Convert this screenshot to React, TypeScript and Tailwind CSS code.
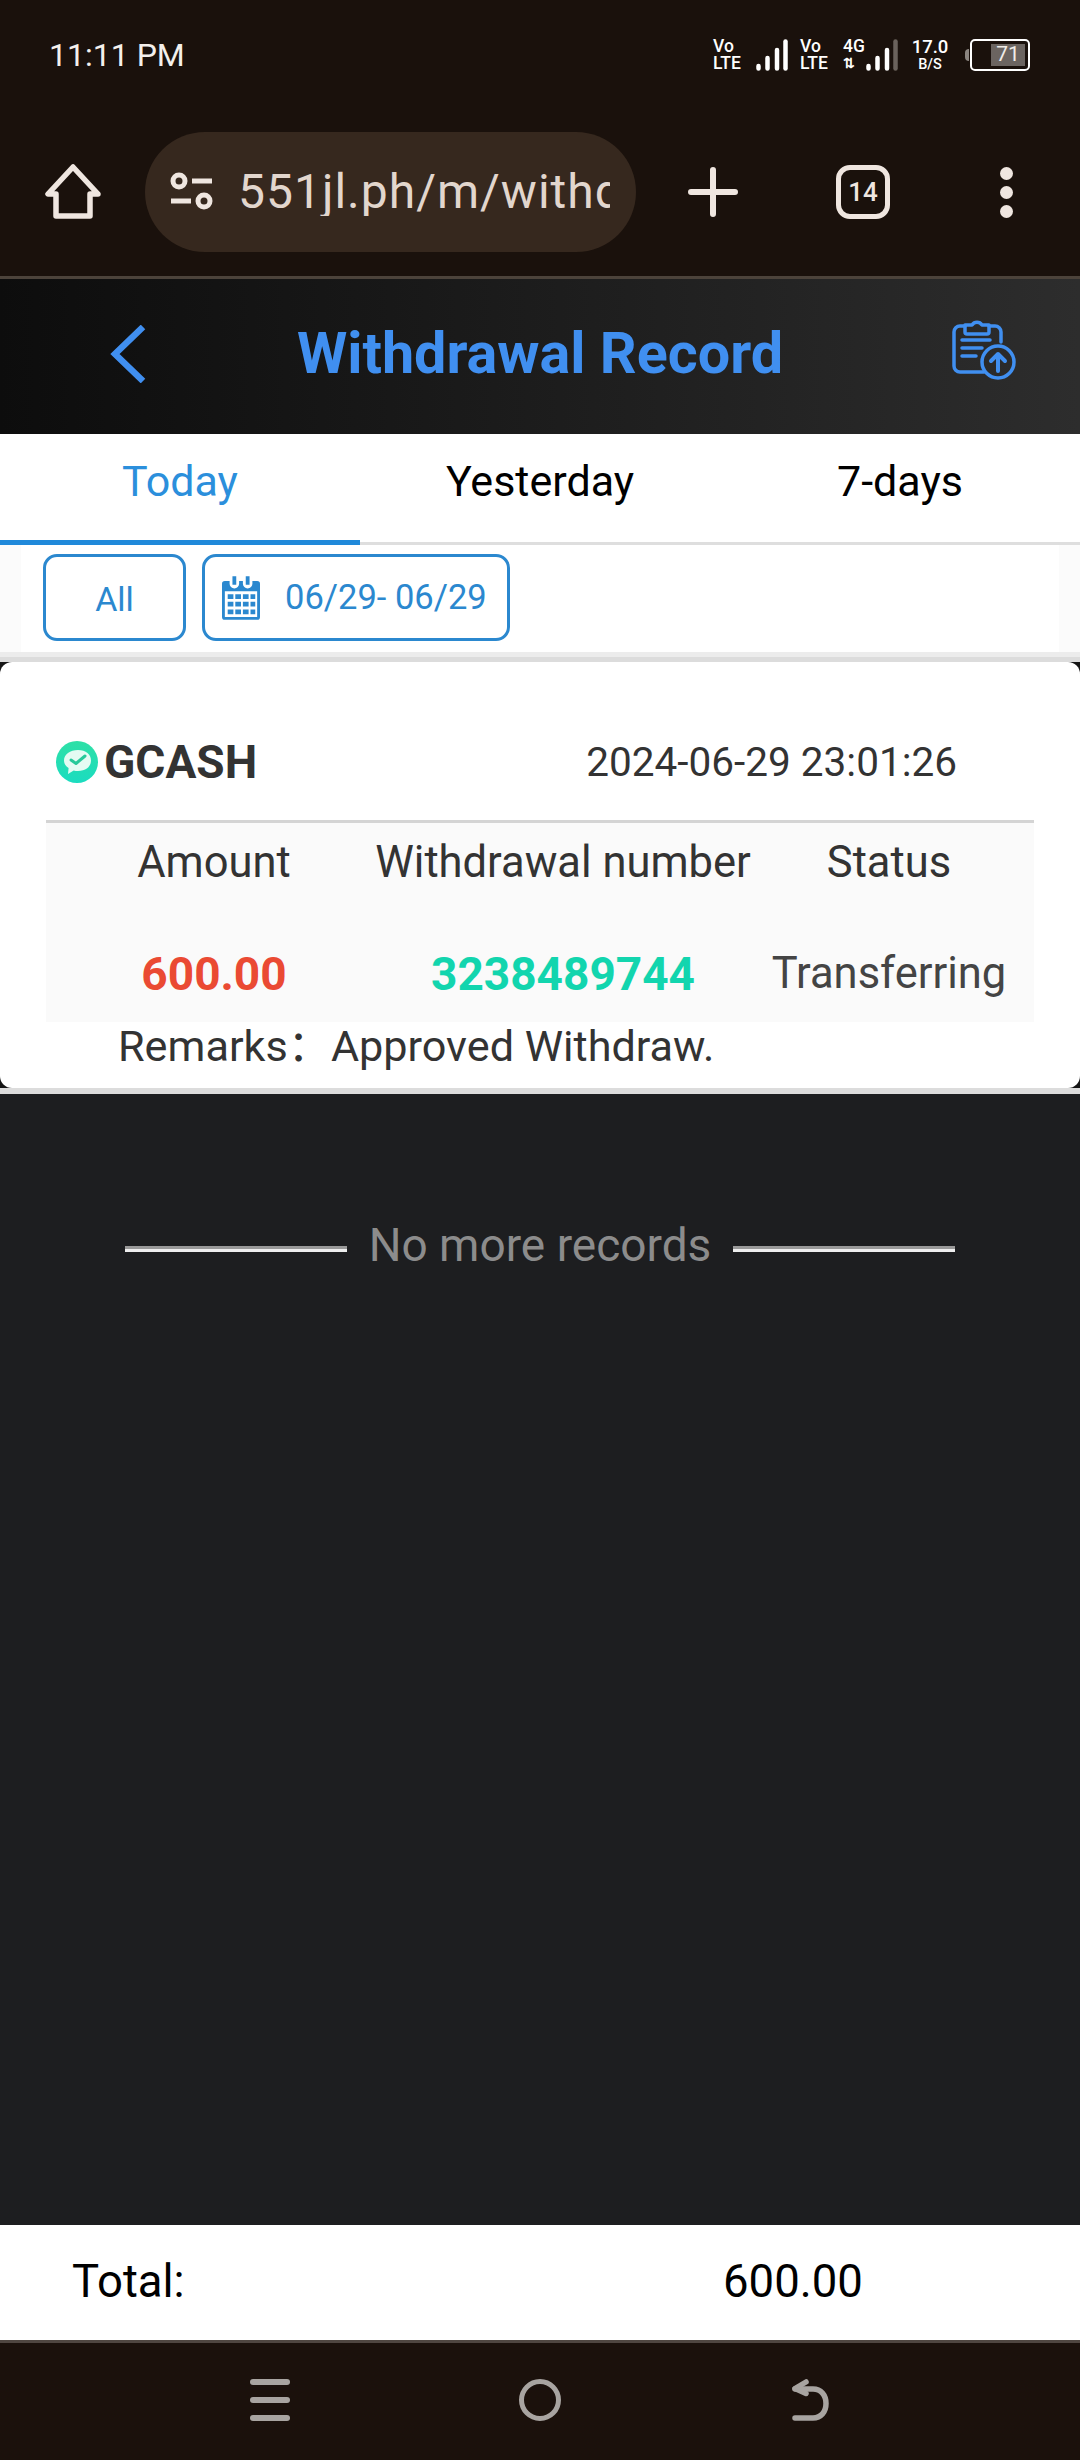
import React from "react";

function Net({ top, bottom }: { top: string; bottom: string }) {
  return (
    <div className="flex w-[29px] flex-col items-start text-[17.500px] font-medium leading-[17px] text-white">
      <span>{top}</span>
      <span>{bottom}</span>
    </div>
  );
}

function Signal({ dim }: { dim?: boolean }) {
  return (
    <svg width="32" height="32" viewBox="0 0 32 32" fill="none" strokeLinecap="round" strokeWidth="4.5">
      <path d="M2.500 27v2.500M11.500 19v10.500M21 11v18.500" stroke="#fff" />
      <path d="M29.500 2.500v27" stroke={dim ? "#6a625c" : "#fff"} />
    </svg>
  );
}

function StatusBar() {
  return (
    <div className="flex h-[110px] items-center justify-between pl-[49px] pr-[50px] pb-[1px]">
      <span className="text-[32px] leading-none text-[#f4f0ec]">11:11 PM</span>
      <div className="flex items-center">
        <Net top="Vo" bottom="LTE" />
        <div className="ml-[14px]">
          <Signal />
        </div>
        <div className="ml-[12px]">
          <Net top="Vo" bottom="LTE" />
        </div>
        <div className="ml-[14px] flex w-[23px] flex-col text-[17.500px] font-medium leading-[17px] text-white">
          <span>4G</span>
          <span className="text-[14px] font-bold">⇅</span>
        </div>
        <div className="ml-[0px]">
          <Signal dim />
        </div>
        <div className="ml-[14px] flex w-[36px] flex-col items-center text-white">
          <span className="text-[18.500px] font-medium leading-[19px]">17.0</span>
          <span className="text-[14.500px] font-medium leading-[15px]">B/S</span>
        </div>
        <div className="ml-[17px] h-[12px] w-[4px] rounded-l-sm bg-[#8b8580]" />
        <div className="ml-[1px] h-[32px] w-[60px] rounded-[5px] border-2 border-white p-[3px]">
          <div className="ml-[16px] flex h-full w-[34px] items-center justify-center bg-[#6b6460] text-[21px] leading-none text-[#f0ece8]">
            71
          </div>
        </div>
      </div>
    </div>
  );
}

function BrowserBar() {
  return (
    <div className="flex h-[166px] items-start pt-[22px] text-[#efe6e0]">
      <div className="flex h-[120px] w-[145px] items-center justify-center pl-[1px]">
        <svg width="56" height="56" viewBox="0 0 56 56" fill="none" stroke="currentColor" strokeWidth="5.5" strokeLinejoin="round">
          <path d="M28 3 3 30h8v22h34V30h8L28 3Z" />
        </svg>
      </div>
      <div className="flex h-[120px] w-[491px] items-center rounded-[60px] bg-[#36281e] pl-[24px]">
        <svg width="46" height="40" viewBox="0 0 46 40" fill="none" stroke="currentColor" strokeWidth="5">
          <circle cx="10" cy="9" r="6" />
          <path d="M23 9h20M2 29h20" />
          <circle cx="35" cy="29" r="6" />
        </svg>
        <div className="ml-[23px] w-[372px] overflow-hidden whitespace-nowrap text-[48px] leading-none tracking-[1px] text-[#e2d6cd]">
          551jl.ph/m/withdraw
        </div>
      </div>
      <div className="flex h-[120px] w-[152px] items-center justify-center pl-[2px]">
        <svg width="50" height="50" viewBox="0 0 50 50" fill="none" stroke="currentColor" strokeWidth="6" strokeLinecap="round">
          <path d="M25 3v44M3 25h44" />
        </svg>
      </div>
      <div className="flex h-[120px] w-[150px] items-center justify-center">
        <div className="flex h-[54px] w-[54px] items-center justify-center rounded-[14px] border-[5px] border-[#efe6e0] text-[26px] font-medium leading-none">
          14
        </div>
      </div>
      <div className="flex h-[120px] flex-1 flex-col items-center justify-center gap-[6px] pr-[6px]">
        <span className="h-[13px] w-[13px] rounded-full bg-[#efe6e0]" />
        <span className="h-[13px] w-[13px] rounded-full bg-[#efe6e0]" />
        <span className="h-[13px] w-[13px] rounded-full bg-[#efe6e0]" />
      </div>
    </div>
  );
}

function Header() {
  return (
    <div className="flex h-[155px] items-center justify-between bg-gradient-to-r from-[#0d0d0d] to-[#2d2d2d] pl-[110px] pr-[64px] text-[#408ff0]">
      <svg width="36" height="58" viewBox="0 0 36 58" fill="none" stroke="currentColor" strokeWidth="6.5" className="mb-[6px]">
        <path d="M33 2 5 29l28 27" />
      </svg>
      <h1 className="mr-[18px] pb-[5px] text-[57.500px] font-bold leading-none">Withdrawal Record</h1>
      <svg width="64" height="62" viewBox="0 0 64 62" fill="none" stroke="currentColor" strokeWidth="3.5" strokeLinecap="round" strokeLinejoin="round" className="mb-[16px]">
        <path d="M13 8H8a6 6 0 0 0-6 6v34a6 6 0 0 0 6 6h24" />
        <path d="M37 8h6a6 6 0 0 1 6 6v10" />
        <path d="M13 14V7h7a6 6 0 0 1 10 0h7v7a2 2 0 0 1-2 2H15a2 2 0 0 1-2-2Z" />
        <path d="M10 22h28M10 30h20M10 38h14" />
        <circle cx="46" cy="44" r="16" />
        <path d="M46 53V36M39 43l7-7 7 7" strokeWidth="4" />
      </svg>
    </div>
  );
}

function Tabs() {
  return (
    <div className="grid h-[111px] grid-cols-3 border-b-[3px] border-[#dedede] bg-white text-[43px] leading-none">
      <div className="relative flex items-start justify-center pt-[26px] text-[#2b8fdc]">
        Today
        <div className="absolute -bottom-[3px] left-0 h-[5px] w-full bg-[#2089da]" />
      </div>
      <div className="flex items-start justify-center pt-[26px] text-black">Yesterday</div>
      <div className="flex items-start justify-center pt-[26px] text-black">7-days</div>
    </div>
  );
}

function Filters() {
  return (
    <div className="h-[117px] border-b-[5px] border-[#dcdcdc] bg-[#ececec]">
      <div className="h-[107px] bg-[#fbfbfb] px-[21px]">
        <div className="flex h-full gap-[16px] bg-white pl-[22px] pt-[9px]">
          <div className="flex h-[87px] w-[143px] items-center justify-center rounded-[14px] border-[3px] border-[#2b88cf] pt-[2px] text-[34px] leading-none text-[#2b88cf]">
            All
          </div>
          <div className="flex h-[87px] w-[308px] items-center rounded-[14px] border-[3px] border-[#2b88cf] pl-[17px] text-[34.500px] leading-none text-[#2b88cf]">
            <svg width="38" height="44" viewBox="0 0 40 46" fill="#2b88cf">
              <path fillRule="evenodd" d="M3 5h5v3a5 5 0 0 0 10 0V5h4v3a5 5 0 0 0 10 0V5h5a3 3 0 0 1 3 3v35a3 3 0 0 1-3 3H3a3 3 0 0 1-3-3V8a3 3 0 0 1 3-3Zm0 11v27h34V16H3Z" />
              <path d="M11 0h4v9h-4zM25 0h4v9h-4z" />
              <path d="M6 19h6v5H6zM14 19h6v5h-6zM22 19h6v5h-6zM30 19h5v5h-5zM6 27h6v5H6zM14 27h6v5h-6zM22 27h6v5h-6zM30 27h5v5h-5zM6 35h6v5H6zM14 35h6v5h-6zM22 35h6v5h-6zM30 35h5v5h-5z" />
            </svg>
            <span className="ml-[25px] whitespace-nowrap">06/29- 06/29</span>
          </div>
        </div>
      </div>
    </div>
  );
}

function GcashIcon() {
  return (
    <svg width="42" height="42" viewBox="0 0 42 42">
      <defs>
        <linearGradient id="gc" x1="0" y1="0" x2="0" y2="1">
          <stop offset="0" stopColor="#2ee0a6" />
          <stop offset="1" stopColor="#1bdcc0" />
        </linearGradient>
      </defs>
      <circle cx="21" cy="21" r="21" fill="url(#gc)" />
      <path d="M22 9c8 0 13 4.500 13 10.500S30 30 22 30c-1.500 0-3-.2-4.300-.6L12 33l.6-6C9.500 25 8 22.500 8 19.500 8 13.500 14 9 22 9Z" fill="#e4fbf3" />
      <path d="m15 19 5 3.500L29 15" fill="none" stroke="#27c99a" strokeWidth="3" strokeLinecap="round" strokeLinejoin="round" />
    </svg>
  );
}

function RecordCard() {
  return (
    <div className="border-b-[6px] border-[#dcdcdc] bg-[#151515]">
      <div className="h-[426px] rounded-[12px] bg-white">
        <div className="flex h-[158px] items-start justify-between pl-[56px] pr-[123px] pt-[77px] text-[#333]">
          <div className="flex items-center gap-[6px]">
            <GcashIcon />
            <span className="text-[46px] font-bold leading-none">GCASH</span>
          </div>
          <span className="pt-[3px] text-[40.500px] leading-none">2024-06-29 23:01:26</span>
        </div>
        <div className="mx-[46px] border-t-[3px] border-[#d4d4d4] bg-[#fafafa] text-[43.500px] leading-none">
          <div className="grid h-[78px] grid-cols-[336px_362px_290px] items-center justify-items-center whitespace-nowrap pt-[2px] text-[#333]">
            <span>Amount</span>
            <span>Withdrawal number</span>
            <span>Status</span>
          </div>
          <div className="grid h-[121px] grid-cols-[336px_362px_290px] items-center justify-items-center whitespace-nowrap pt-[24px]">
            <span className="text-[46px] font-bold text-[#ea4a33]">600.00</span>
            <span className="text-[46px] font-bold text-[#12d5ae]">3238489744</span>
            <span className="text-[#444]">Transferring</span>
          </div>
        </div>
        <div className="pl-[118px] text-[43.200px] leading-[40px] text-[#333]">
          Remarks<span className="font-['Noto_Sans_CJK_SC']">：</span>Approved Withdraw.
        </div>
      </div>
    </div>
  );
}

function NoMore() {
  return (
    <div className="flex-1 bg-[#1d1e20]">
      <div className="flex items-center justify-center gap-[22px] pt-[127px] text-[46px] leading-[48px] text-[#8c8c8c]">
        <div className="mt-[7px] h-[6px] w-[222px] border-t-[3px] border-[#999] bg-[#eee]" />
        <span>No more records</span>
        <div className="mt-[7px] h-[6px] w-[222px] border-t-[3px] border-[#999] bg-[#eee]" />
      </div>
    </div>
  );
}

function Total() {
  return (
    <div className="flex h-[115px] items-center bg-white pb-[2px] text-[45.500px] leading-none text-black">
      <span className="ml-[72px] w-[651px]">Total:</span>
      <span>600.00</span>
    </div>
  );
}

function NavBar() {
  return (
    <div className="flex h-[120px] items-start border-t-[3px] border-[#4f4641] bg-[#1b110c] pl-[250px] pt-[36px] text-[#a8a4a1]">
      <div className="flex h-[42px] w-[40px] flex-col justify-between">
        <span className="h-[6px] rounded-full bg-[#a8a4a1]" />
        <span className="h-[6px] rounded-full bg-[#a8a4a1]" />
        <span className="h-[6px] rounded-full bg-[#a8a4a1]" />
      </div>
      <div className="ml-[229px] h-[42px] w-[42px] rounded-full border-[5px] border-[#a8a4a1]" />
      <svg width="40" height="42" viewBox="0 0 40 42" fill="none" stroke="currentColor" strokeWidth="5.500" strokeLinecap="round" strokeLinejoin="round" className="ml-[230px]">
        <path d="M4 10h18c8 0 13 6 13 14.500S30 39 22 39H4" />
        <path d="M15 3 4 9.500l11 5" />
      </svg>
    </div>
  );
}

export default function App() {
  return (
    <div className="flex h-[2460px] w-[1080px] flex-col overflow-hidden bg-[#1d1e20] font-['Roboto',sans-serif]">
      <div className="h-[279px] border-b-[3px] border-[#4c433b] bg-[#1a110c]">
        <StatusBar />
        <BrowserBar />
      </div>
      <Header />
      <Tabs />
      <Filters />
      <RecordCard />
      <NoMore />
      <Total />
      <NavBar />
    </div>
  );
}
